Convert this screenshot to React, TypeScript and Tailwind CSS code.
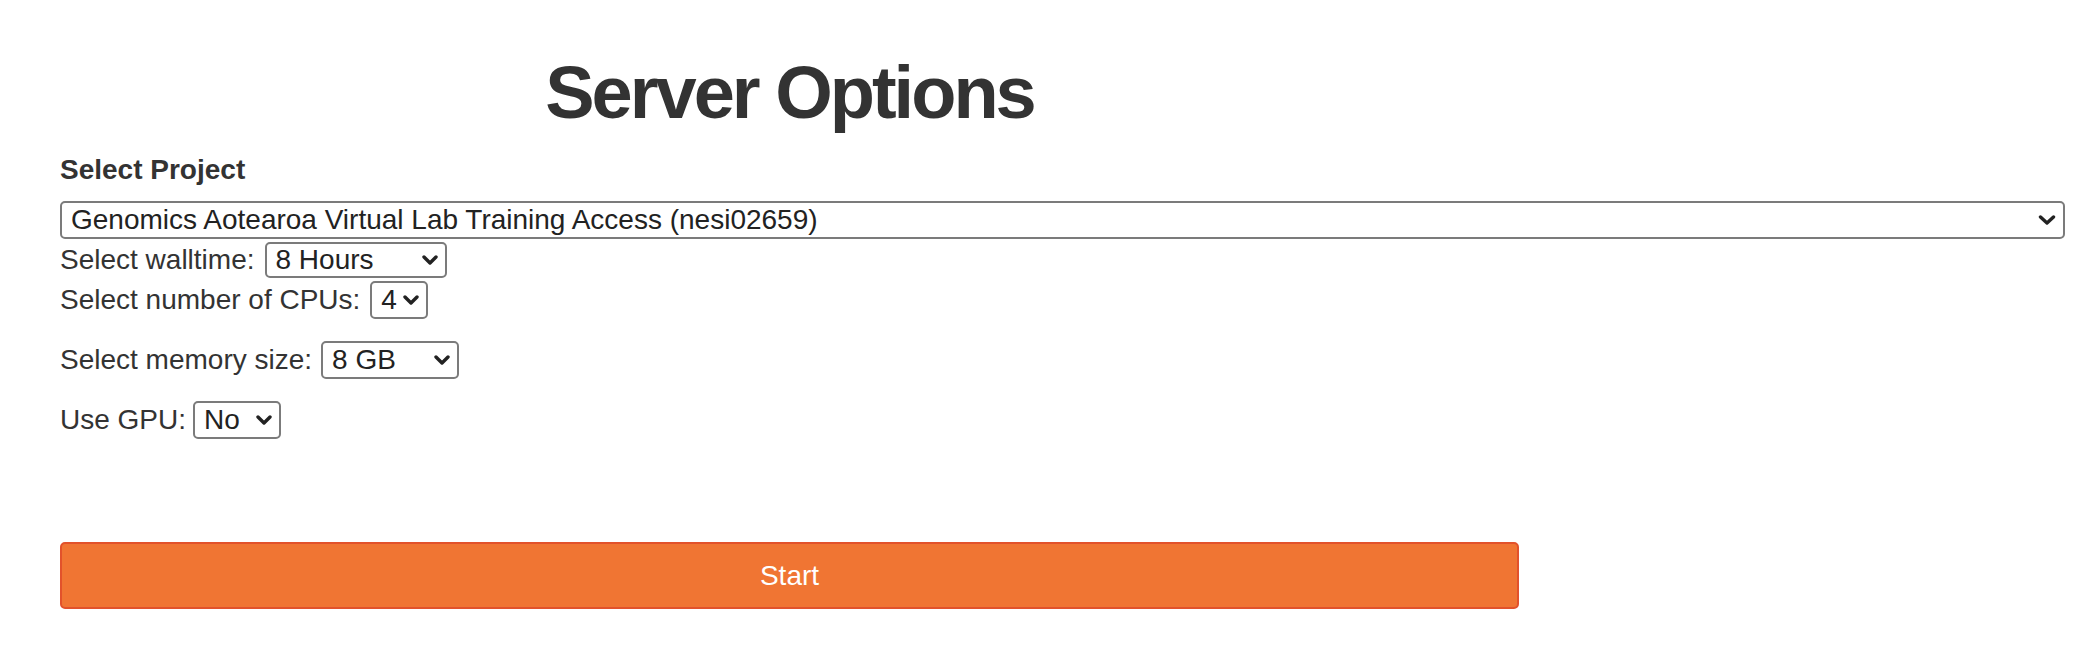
import React from "react";

const Chevron = ({ big = false }: { big?: boolean }) => (
  <svg
    width={big ? 18 : 16}
    height={10}
    viewBox={big ? "0 0 18 10" : "0 0 16 10"}
    className="shrink-0"
  >
    <polyline
      points={big ? "2.5,2 9,8 15.5,2" : "2,2 8,8 14,2"}
      fill="none"
      stroke="#222"
      strokeWidth="3.4"
      strokeLinecap="round"
      strokeLinejoin="round"
    />
  </svg>
);

function FakeSelect({
  value,
  className,
  big = false,
}: {
  value: string;
  className: string;
  big?: boolean;
}) {
  return (
    <div
      className={
        "flex items-center justify-between rounded-[5px] border-2 border-[#7b7b7b] bg-white pl-[9px] pr-[7px] text-[#222] " +
        className
      }
    >
      <span className="whitespace-nowrap leading-[32px]">{value}</span>
      <Chevron big={big} />
    </div>
  );
}

export default function App() {
  return (
    <div
      className="min-h-[666px] bg-white pl-[60px] pt-[56px] text-[28px] text-[#333]"
      style={{ fontFamily: '"Liberation Sans", Arial, sans-serif' }}
    >
      <div className="w-[1459px]">
        <h1 className="text-center text-[74px] font-bold leading-[74px] tracking-[-3px] text-[#333]">
          Server Options
        </h1>
      </div>

      <div className="mt-[24px] font-bold leading-[32px]">Select Project</div>

      <FakeSelect
        value="Genomics Aotearoa Virtual Lab Training Access (nesi02659)"
        className="mt-[15px] h-[38px] w-[2005px]"
        big
      />

      <div className="mt-[3px] flex h-[36px] items-center gap-[10px]">
        <span className="leading-[32px]">Select walltime:</span>
        <FakeSelect value="8 Hours" className="h-[36px] w-[182px]" />
      </div>

      <div className="mt-[3px] flex h-[38px] items-center gap-[10px]">
        <span className="leading-[32px]">Select number of CPUs:</span>
        <FakeSelect value="4" className="h-[38px] w-[58px]" />
      </div>

      <div className="mt-[22px] flex h-[38px] items-center gap-[9px]">
        <span className="leading-[32px]">Select memory size:</span>
        <FakeSelect value="8 GB" className="h-[38px] w-[138px]" />
      </div>

      <div className="mt-[22px] flex h-[38px] items-center gap-[7px]">
        <span className="leading-[32px]">Use GPU:</span>
        <FakeSelect value="No" className="h-[38px] w-[88px]" />
      </div>

      <button className="mt-[103px] flex h-[67px] w-[1459px] items-center justify-center rounded-[5px] border-2 border-[#e2522b] bg-[#f07533] text-[28px] text-white">
        Start
      </button>
    </div>
  );
}
